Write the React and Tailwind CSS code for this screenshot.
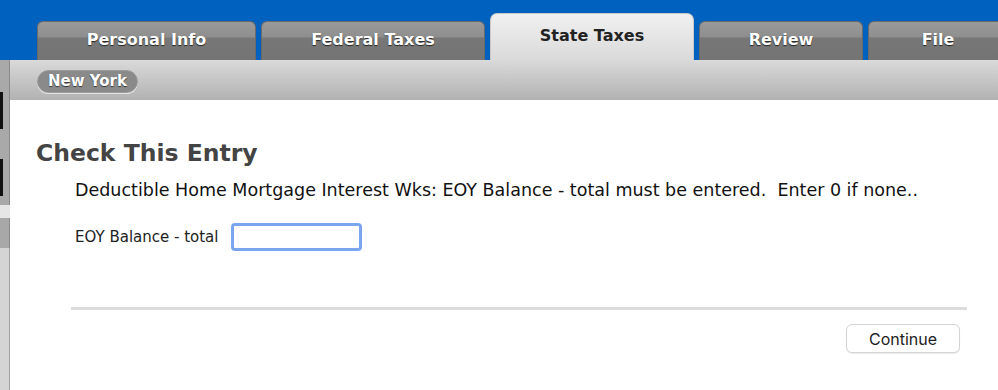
import React from 'react';

const tabs = [
  { label: 'Personal Info', w: 'w-[219px]' },
  { label: 'Federal Taxes', w: 'w-[224px]' },
  { label: 'State Taxes', w: 'w-[204px]', active: true },
  { label: 'Review', w: 'w-[164px]' },
  { label: 'File', w: 'w-[140px]' },
];

function Tab({ label, w, active }) {
  if (active) {
    return (
      <div
        className={`${w} h-[47px] shrink-0 rounded-t-[7px] border border-b-0 border-[#c9c9c9] bg-gradient-to-b from-[#f1f1f1] to-[#dadada] flex justify-center pt-[10px] text-[16px] font-bold text-[#222]`}
      >
        {label}
      </div>
    );
  }
  return (
    <div
      className={`${w} h-[39px] shrink-0 rounded-t-[6px] border border-b-0 border-[#6a6a6a] bg-[linear-gradient(to_bottom,#9a9a9a_0px,#8e8e8e_15px,#777_16px,#747474_100%)] flex justify-center items-center pb-[2px] text-[16px] font-bold text-white [text-shadow:0_1px_1px_rgba(0,0,0,0.7)]`}
    >
      {label}
    </div>
  );
}

export default function App() {
  return (
    <div className="w-[998px] h-[390px] overflow-hidden bg-white flex flex-col font-['DejaVu_Sans',sans-serif]">
      {/* Top tab bar */}
      <div className="h-[60px] shrink-0 bg-[#0062be] flex items-end gap-[5px] pl-[37px]">
        {tabs.map((t) => (
          <Tab key={t.label} {...t} />
        ))}
      </div>

      <div className="flex flex-1 min-h-0">
        {/* Left side strip */}
        <div className="w-[10px] shrink-0 flex flex-col">
          <div className="h-[145px] bg-[#a9a9a9] border-r border-[#8a8a8a] flex flex-col pt-[32px] gap-[30px]">
            <div className="w-[3px] h-[37px] bg-[#111]" />
            <div className="w-[3px] h-[37px] bg-[#111]" />
          </div>
          <div className="h-[13px] bg-[#e6e6e6]" />
          <div className="h-[30px] bg-[#a8a8a8] border-r border-[#8a8a8a]" />
          <div className="flex-1 bg-[#d4d4d4] border-r border-[#a0a0a0]" />
        </div>

        {/* Main column */}
        <div className="flex-1 flex flex-col">
          <div className="h-[40px] shrink-0 bg-gradient-to-b from-[#dadada] to-[#b2b2b2] flex items-start pt-[10px] pl-[27px]">
            <div className="h-[23px] px-[10px] rounded-full bg-[#8a8a8a] border border-[#9c9c9c] shadow-[0_1px_0_rgba(255,255,255,0.6)] flex items-center text-[15px] font-bold text-white [text-shadow:0_1px_1px_rgba(0,0,0,0.6)]">
              New York
            </div>
          </div>

          <div className="flex-1 pt-[37px] pl-[26px]">
            <h1 className="text-[23.5px] leading-[32px] font-bold text-[#444]">Check This Entry</h1>
            <p className="mt-[10px] ml-[39px] text-[17.5px] leading-[22px] text-[#111] whitespace-pre">
              {'Deductible Home Mortgage Interest Wks: EOY Balance - total must be entered.  Enter 0 if none..'}
            </p>
            <div className="mt-[22px] ml-[39px] flex items-center gap-[13px]">
              <span className="text-[15px] text-[#222]">EOY Balance - total</span>
              <input
                type="text"
                className="w-[131px] h-[28px] rounded-[4px] border-[3px] border-[#7ba6ef] bg-white outline-none"
              />
            </div>
            <div className="mt-[56px] ml-[35px] w-[896px] h-[3px] bg-[#dcdcdc]" />
            <div className="flex justify-end w-[924px] mt-[14px]">
              <button className="w-[114px] h-[29px] rounded-[6px] border border-[#d4d4d4] bg-white shadow-[0_1px_1px_rgba(0,0,0,0.08)] text-[16px] text-[#222] font-['Inter',sans-serif]">
                Continue
              </button>
            </div>
          </div>
        </div>
      </div>
    </div>
  );
}
